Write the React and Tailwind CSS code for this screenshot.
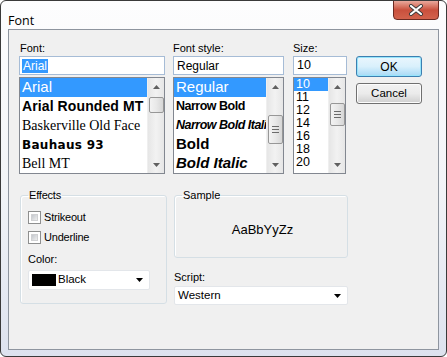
import React from 'react'

const ui = { fontFamily: '"Liberation Sans", Arial, sans-serif' }

function Arrow({ down }) {
  return (
    <svg width="7" height="4" viewBox="0 0 7 4">
      {down ? <path d="M0 0h7L3.5 4z" fill="#606060" /> : <path d="M0 4h7L3.5 0z" fill="#606060" />}
    </svg>
  )
}

function ScrollBar({ thumbTop, thumbHeight, grip }) {
  return (
    <div className="relative w-[17px] h-full bg-gradient-to-r from-[#e6e6e6] via-[#f2f2f2] to-[#e6e6e6] border-l border-[#efefef]">
      <div className="h-[17px] flex items-center justify-center">
        <Arrow />
      </div>
      <div
        className="absolute left-[1px] w-[15px] rounded-[2px] border border-[#979797] bg-gradient-to-r from-[#f3f3f3] via-[#e8e8e8] to-[#d6d6d6] flex flex-col items-center justify-center gap-[2px]"
        style={{ top: thumbTop, height: thumbHeight }}
      >
        {grip && (
          <>
            <div className="w-[7px] h-[1px] bg-[#6b6b6b]" />
            <div className="w-[7px] h-[1px] bg-[#6b6b6b]" />
            <div className="w-[7px] h-[1px] bg-[#6b6b6b]" />
          </>
        )}
      </div>
      <div className="absolute bottom-0 left-0 w-[17px] h-[17px] flex items-center justify-center">
        <Arrow down />
      </div>
    </div>
  )
}

function Combo({ children, className }) {
  return (
    <div className={`flex items-center bg-white border border-[#e3e6ea] rounded-[2px] ${className}`}>
      <div className="flex-1 flex items-center text-[11.5px] text-black">{children}</div>
      <div className="w-[16px] flex items-center justify-center pr-[4px]">
        <svg width="7" height="4" viewBox="0 0 7 4">
          <path d="M0 0h7L3.5 4z" fill="#000" />
        </svg>
      </div>
    </div>
  )
}

function Check({ label }) {
  return (
    <div className="flex items-center gap-[3px] h-[13px]">
      <div className="w-[13px] h-[13px] border border-[#8e8f8f] bg-white p-[2px]">
        <div className="w-full h-full bg-gradient-to-br from-[#c4c8ce] to-[#eeeeee] border border-[#d0d1d3]" />
      </div>
      <span className="text-[11px] tracking-[-0.2px] text-black">{label}</span>
    </div>
  )
}

export default function App() {
  const fonts = [
    { name: 'Arial', cls: 'text-[15px]', ff: '"Liberation Sans", Arial, sans-serif' },
    { name: 'Arial Rounded MT', cls: 'text-[14px] font-bold tracking-[0.1px]', ff: '"Liberation Sans", Arial, sans-serif' },
    { name: 'Baskerville Old Face', cls: 'text-[14px]', ff: '"Liberation Serif", serif' },
    { name: 'Bauhaus 93', cls: 'text-[12px] font-black tracking-[0.3px]', ff: '"DejaVu Sans", sans-serif' },
    { name: 'Bell MT', cls: 'text-[14px]', ff: '"Liberation Serif", serif' },
  ]
  const styles = [
    { name: 'Regular', cls: 'text-[15px]' },
    { name: 'Narrow Bold', cls: 'text-[12.5px] font-bold tracking-[-0.5px]' },
    { name: 'Narrow Bold Italic', cls: 'text-[12.5px] font-bold italic tracking-[-0.5px]' },
    { name: 'Bold', cls: 'text-[15px] font-bold' },
    { name: 'Bold Italic', cls: 'text-[15px] font-bold italic' },
  ]
  const sizes = ['10', '11', '12', '14', '16', '18', '20']

  return (
    <div
      className="relative w-[447px] h-[357px] border border-[#3a3a3a] rounded-[6px] bg-gradient-to-b from-[#fdfdfe] via-[#f3f5f8] to-[#dde2ee] overflow-hidden"
      style={ui}
    >
      {/* Title bar */}
      <div className="h-[28px] pl-[7px] pt-[7px]">
        <span className="text-[12.5px] text-black" style={{ fontFamily: '"Open Sans", "Liberation Sans", sans-serif' }}>
          Font
        </span>
      </div>
      <div className="absolute top-[-1px] right-[7px] w-[46px] h-[20px] rounded-b-[4px] border border-[#6b2a22] bg-gradient-to-b from-[#e9a99c] via-[#c9503d] to-[#d2624c] flex items-center justify-center">
        <svg width="16" height="12" viewBox="0 0 16 12">
          <path d="M3 2l10 8M13 2L3 10" stroke="#3a3a3a" strokeWidth="4" strokeLinecap="round" />
          <path d="M3 2l10 8M13 2L3 10" stroke="#fff" strokeWidth="2.2" strokeLinecap="round" />
        </svg>
      </div>

      {/* Client area */}
      <div className="mx-[7px] h-[321px] border border-[#8e959f] bg-[#f0f0f0] pt-[10px] pl-[10px] flex flex-col">
        <div className="flex">
          {/* Font column */}
          <div className="w-[146px] flex flex-col">
            <div className="h-[16px] text-[11px] text-black pl-[1px]">Font:</div>
            <div className="h-[19px] bg-white border border-[#a6bcd6] flex items-center pl-[2px]">
              <span className="bg-[#3399ff] text-white text-[12px] leading-[14px] px-[1px]">Arial</span>
            </div>
            <div className="mt-[2px] h-[97px] bg-white border border-[#828790] flex">
              <div className="flex-1 overflow-hidden pt-0">
                {fonts.map((f, i) => (
                  <div
                    key={f.name}
                    className={`h-[19px] flex items-center pl-[2px] whitespace-nowrap overflow-hidden ${f.cls} ${i === 0 ? 'bg-[#3399ff] text-white' : 'text-black'}`}
                    style={{ fontFamily: f.ff }}
                  >
                    {f.name}
                  </div>
                ))}
              </div>
              <ScrollBar thumbTop={19} thumbHeight={16} />
            </div>
          </div>

          {/* Font style column */}
          <div className="ml-[8px] w-[111px] flex flex-col">
            <div className="h-[16px] text-[11px] text-black">Font style:</div>
            <div className="h-[19px] bg-white border border-[#a6bcd6] flex items-center pl-[3px] text-[12px] text-black">
              Regular
            </div>
            <div className="mt-[2px] h-[97px] bg-white border border-[#828790] flex">
              <div className="flex-1 overflow-hidden">
                {styles.map((s, i) => (
                  <div
                    key={s.name}
                    className={`h-[19px] flex items-center pl-[2px] whitespace-nowrap overflow-hidden ${s.cls} ${i === 0 ? 'bg-[#3399ff] text-white' : 'text-black'}`}
                  >
                    {s.name}
                  </div>
                ))}
              </div>
              <ScrollBar thumbTop={37} thumbHeight={29} grip />
            </div>
          </div>

          {/* Size column */}
          <div className="ml-[9px] w-[54px] flex flex-col">
            <div className="h-[16px] text-[11px] text-black">Size:</div>
            <div className="h-[19px] bg-white border border-[#a6bcd6] flex items-center pl-[3px] text-[12.5px] text-black">
              10
            </div>
            <div className="mt-[2px] h-[97px] w-[53px] bg-white border border-[#828790] flex">
              <div className="flex-1 overflow-hidden">
                {sizes.map((s, i) => (
                  <div
                    key={s}
                    className={`h-[13px] flex items-center pl-[2px] text-[12.5px] ${i === 0 ? 'bg-[#3399ff] text-white' : 'text-black'}`}
                  >
                    {s}
                  </div>
                ))}
              </div>
              <ScrollBar thumbTop={25} thumbHeight={23} grip />
            </div>
          </div>

          {/* Buttons */}
          <div className="ml-[9px] w-[66px] flex flex-col pt-[16px] gap-[6px]">
            <button className="h-[21px] rounded-[3px] border border-[#3c7fb1] bg-gradient-to-b from-[#eaf6fd] via-[#d9f0fc] to-[#a7d9f5] text-[12px] text-black shadow-[inset_0_0_0_1px_#97e5fb]">
              OK
            </button>
            <button className="h-[21px] rounded-[3px] border border-[#707070] bg-gradient-to-b from-[#f2f2f2] via-[#ebebeb] to-[#cfcfcf] text-[11.5px] text-black shadow-[inset_0_0_0_1px_#fcfcfc]">
              Cancel
            </button>
          </div>
        </div>

        {/* Bottom section */}
        <div className="flex mt-[15px]">
          <fieldset className="ml-[1px] w-[147px] h-[115px] border border-[#d5dfe5] rounded-[3px] shadow-[inset_1px_1px_0_#fff] px-[7px]">
            <legend className="ml-[0px] px-[1px] text-[11px] tracking-[-0.2px] text-black leading-[13px]">Effects</legend>
            <div className="flex flex-col pt-[9px]">
              <Check label="Strikeout" />
              <div className="h-[7px]" />
              <Check label="Underline" />
              <div className="mt-[9px] h-[13px] text-[11px] text-black leading-[13px]">Color:</div>
              <Combo className="mt-[4px] h-[20px] w-[122px]">
                <div className="ml-[3px] w-[24px] h-[12px] bg-black" />
                <span className="ml-[2px]">Black</span>
              </Combo>
            </div>
          </fieldset>

          <div className="ml-[7px] w-[174px] flex flex-col">
            <fieldset className="h-[69px] border border-[#d5dfe5] rounded-[3px] shadow-[inset_1px_1px_0_#fff]">
              <legend className="ml-[7px] px-[1px] text-[11px] text-black leading-[13px]">Sample</legend>
              <div className="h-[54px] flex items-center justify-center text-[13px] text-black pl-[3px] pt-[2px]">AaBbYyZz</div>
            </fieldset>
            <div className="mt-[13px] h-[15px] text-[11px] text-black leading-[13px]">Script:</div>
            <Combo className="h-[19px] pl-[3px]">Western</Combo>
          </div>
        </div>
      </div>
    </div>
  )
}
